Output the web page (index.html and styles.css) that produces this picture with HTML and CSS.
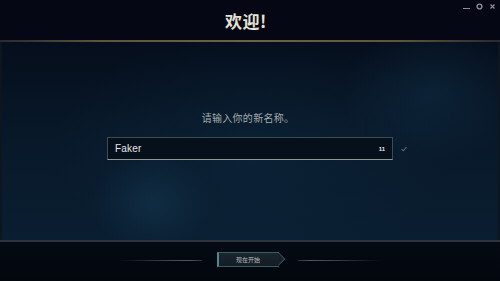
FILE: index.html
```html
<!DOCTYPE html>
<html>
<head>
  <meta charset="utf-8">
  <title>欢迎</title>
  <link rel="stylesheet" href="styles.css">
</head>
<body>
  <div class="window">
    <div class="header">
      <h1 class="title">欢迎!</h1>
      <div class="controls">
        <span class="ctl min"></span>
        <svg class="ctl" width="7" height="7" viewBox="0 0 7 7"><circle cx="3.5" cy="3.5" r="2.4" fill="none" stroke="#8a8e98" stroke-width="1.4"/></svg>
        <svg class="ctl" width="7" height="7" viewBox="0 0 7 7"><path d="M1.5 1.5 L5.5 5.5 M5.5 1.5 L1.5 5.5" stroke="#8a8e98" stroke-width="1.2"/></svg>
      </div>
    </div>
    <div class="gold-line"></div>
    <div class="main">
      <p class="prompt">请输入你的新名称。</p>
      <div class="field-row">
        <div class="field">
          <span class="name">Faker</span>
          <span class="count">11</span>
        </div>
        <svg class="check" width="8" height="8" viewBox="0 0 8 8"><path d="M1.5 4.2 L3.2 5.8 L6.5 2.2" fill="none" stroke="#5d6a72" stroke-width="1.1"/></svg>
      </div>
    </div>
    <div class="footer">
      <div class="rule left"></div>
      <button class="start">现在开始<span class="arrow"></span></button>
      <div class="rule right"></div>
    </div>
  </div>
</body>
</html>
```

FILE: styles.css
```css
* {
  margin: 0;
  padding: 0;
  box-sizing: border-box;
}
html,
body {
  width: 500px;
  height: 281px;
  overflow: hidden;
  background: #03060f;
  font-family: "Noto Sans CJK SC", "Noto Sans", sans-serif;
}
.window {
  height: 281px;
  display: flex;
  flex-direction: column;
}
.header {
  height: 40px;
  background: #050814;
  display: flex;
  align-items: center;
  justify-content: center;
  position: relative;
}
.title {
  font-size: 17px;
  font-weight: 700;
  color: #e6e2d6;
  letter-spacing: 0.5px;
  margin-left: -8px;
}
.controls {
  position: absolute;
  top: 2px;
  right: 4px;
  display: flex;
  gap: 6px;
  align-items: center;
  height: 9px;
}
.ctl {
  display: block;
  width: 7px;
  height: 7px;
}
.min {
  border-bottom: 1px solid #8a8e98;
  height: 5px;
}
.gold-line {
  height: 2px;
  background: linear-gradient(90deg, #2a2a2c 0%, #5e553c 20%, #6f6240 50%, #5e553c 80%, #2a2a2c 100%);
  box-shadow: 0 1px 2px #000;
}
.main {
  flex: 1;
  display: flex;
  flex-direction: column;
  align-items: center;
  background:
    radial-gradient(ellipse 60px 50px at 150px 160px, rgba(30, 80, 110, 0.28), transparent),
    radial-gradient(ellipse 90px 70px at 430px 50px, rgba(25, 70, 100, 0.28), transparent),
    radial-gradient(ellipse 200px 120px at 250px 110px, rgba(18, 50, 75, 0.3), transparent),
    linear-gradient(180deg, #050e1c 0%, #081829 45%, #0a1e31 100%);
  border-left: 2px solid #0c1520;
  border-right: 2px solid #0c1520;
}
.prompt {
  margin-top: 68px;
  font-size: 10px;
  color: #a4abab;
  letter-spacing: 0.3px;
  margin-left: -4px;
}
.field-row {
  margin-top: 12px;
  display: flex;
  align-items: center;
  gap: 7px;
  margin-left: 15px;
}
.field {
  width: 286px;
  height: 23px;
  border: 1px solid #3c4a55;
  border-bottom: 1px solid #8d9691;
  background: rgba(6, 14, 22, 0.85);
  display: flex;
  align-items: center;
  justify-content: space-between;
  padding: 0 7px 0 7px;
}
.name {
  font-family: "Liberation Sans", Arial, sans-serif;
  font-size: 10px;
  color: #e4e8ea;
  letter-spacing: 0.2px;
}
.count {
  font-family: "Liberation Sans", Arial, sans-serif;
  font-size: 6px;
  font-weight: 700;
  color: #e8eaea;
}
.check {
  display: block;
}
.footer {
  height: 41px;
  border-top: 2px solid #30353d;
  background: linear-gradient(180deg, #050b14, #02060d);
  display: flex;
  align-items: center;
  justify-content: center;
  gap: 19px;
  padding-bottom: 4px;
}
.rule {
  width: 84px;
  height: 1px;
  margin-top: 1px;
}
.rule.left {
  background: linear-gradient(90deg, transparent, #3c4650 60%, #4e5860 85%, #2a3038);
}
.rule.right {
  background: linear-gradient(90deg, #2a3038, #4e5860 15%, #3c4650 40%, transparent);
}
.start {
  position: relative;
  width: 62px;
  height: 15px;
  border: 1px solid #3d5a60;
  border-left: 2px solid #4c8a92;
  border-right: none;
  background: linear-gradient(180deg, #1a252d, #141c24);
  color: #b8c0c2;
  font-family: "Noto Sans CJK SC", sans-serif;
  font-size: 6px;
  line-height: 13px;
  text-align: center;
  padding-right: 2px;
  margin-left: -4px;
}
.arrow {
  position: absolute;
  right: -5px;
  top: 1px;
  width: 10px;
  height: 10px;
  border-top: 1px solid #3d5a60;
  border-right: 1px solid #3d5a60;
  transform: rotate(45deg) scale(0.9, 0.9);
  background: linear-gradient(45deg, transparent 50%, #171f27 50%);
}
```
